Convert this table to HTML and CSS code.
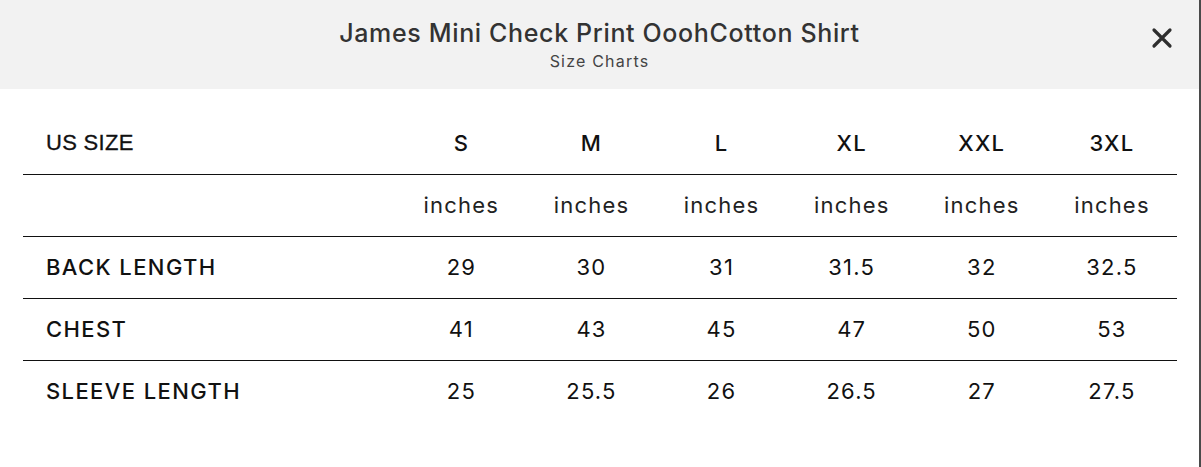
FILE: index.html
```html
<!DOCTYPE html>
<html lang="en">
<head>
<meta charset="utf-8">
<title>Size Charts</title>
<link rel="stylesheet" href="styles.css">
</head>
<body>
<div class="modal">
  <header class="modal-head">
    <h1 class="title">James Mini Check Print OoohCotton Shirt</h1>
    <p class="subtitle">Size Charts</p>
    <button class="close" aria-label="Close">
      <svg width="22" height="22" viewBox="0 0 22 22"><path d="M3 3 L19 19 M19 3 L3 19" stroke="#2e2e2e" stroke-width="3.2" stroke-linecap="round" fill="none"/></svg>
    </button>
  </header>
  <div class="body">
    <table class="chart">
      <colgroup>
        <col class="col-label">
        <col class="col-size"><col class="col-size"><col class="col-size">
        <col class="col-size"><col class="col-size"><col class="col-size">
      </colgroup>
      <tr class="head-row">
        <th class="label us">US SIZE</th>
        <th>S</th><th>M</th><th>L</th><th>XL</th><th>XXL</th><th>3XL</th>
      </tr>
      <tr>
        <td class="label"></td>
        <td class="unit">inches</td><td class="unit">inches</td><td class="unit">inches</td>
        <td class="unit">inches</td><td class="unit">inches</td><td class="unit">inches</td>
      </tr>
      <tr>
        <td class="label">BACK LENGTH</td>
        <td>29</td><td>30</td><td>31</td><td>31.5</td><td>32</td><td>32.5</td>
      </tr>
      <tr>
        <td class="label">CHEST</td>
        <td>41</td><td>43</td><td>45</td><td>47</td><td>50</td><td>53</td>
      </tr>
      <tr class="last">
        <td class="label">SLEEVE LENGTH</td>
        <td>25</td><td>25.5</td><td>26</td><td>26.5</td><td>27</td><td>27.5</td>
      </tr>
    </table>
  </div>
</div>
</body>
</html>
```

FILE: styles.css
```css
html, body {
  margin: 0;
  padding: 0;
  background: #ffffff;
}
body {
  font-family: "Inter", "Open Sans", sans-serif;
  color: #111;
  height: 467px;
  overflow: hidden;
}
.modal {
  position: relative;
  border-right: 2px solid #4a4a4a;
  height: 467px;
  box-sizing: border-box;
}
.modal-head {
  position: relative;
  background: #f2f2f2;
  height: 89px;
  box-sizing: border-box;
  padding-top: 17px;
  text-align: center;
}
.title {
  margin: 0;
  font-size: 25px;
  line-height: 32px;
  font-weight: 500;
  color: #333;
  letter-spacing: 0.65px;
}
.subtitle {
  margin: 0;
  font-size: 16px;
  line-height: 25px;
  color: #444;
  letter-spacing: 1.2px;
}
.close {
  position: absolute;
  top: 27px;
  right: 26px;
  width: 22px;
  height: 22px;
  padding: 0;
  border: 0;
  background: none;
}
.close svg { display: block; }
.body {
  padding: 24px 22px 0 23px;
}
.chart {
  width: 1154px;
  border-collapse: collapse;
  table-layout: fixed;
}
.col-label { width: 373px; }
.col-size { width: 130px; }
.chart th, .chart td {
  height: 59px;
  padding: 0 0 2px 0;
  text-align: center;
  font-size: 22px;
  font-weight: 400;
  letter-spacing: 1.2px;
  border-bottom: 1px solid #111;
  vertical-align: middle;
}
.chart tr.last td { border-bottom: 0; }
.chart th {
  font-weight: 500;
}
.chart .label {
  text-align: left;
  padding-left: 23px;
  font-weight: 500;
  letter-spacing: 1.4px;
}
.chart .us {
  font-family: "Liberation Sans", Arial, sans-serif;
  font-weight: 400;
  -webkit-text-stroke: 0.3px #111;
  font-size: 22px;
  letter-spacing: 0.3px;
}
.chart .unit {
  color: #222;
}
```
